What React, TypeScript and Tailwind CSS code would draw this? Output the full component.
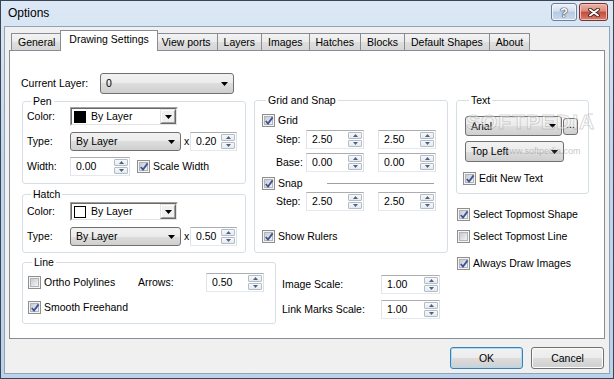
import React from "react";

const tabs = ["General", "Drawing Settings", "View ports", "Layers", "Images", "Hatches", "Blocks", "Default Shapes", "About"];

function DropArrow() {
  return (
    <svg width="7" height="4" viewBox="0 0 7 4" className="shrink-0">
      <path d="M0 0h7L3.5 4z" fill="#000" />
    </svg>
  );
}

// Win7 style drop-down list
function Combo({ text, className = "" }: { text: string; className?: string }) {
  return (
    <div className={`flex items-center rounded-[3px] border border-[#707070] bg-[linear-gradient(#f2f2f2,#ebebeb_50%,#dddddd_50%,#cfcfcf)] pl-[5px] pr-[5px] ${className}`}>
      <span className="flex-1 truncate">{text}</span>
      <DropArrow />
    </div>
  );
}

// classic owner-drawn colour combo
function ColorCombo({ swatch }: { swatch: string }) {
  return (
    <div className="flex h-[19px] w-[108px] border border-b-white border-l-[#a0a0a0] border-r-white border-t-[#a0a0a0]">
      <div className="flex flex-1 items-center border border-b-[#e3e3e3] border-l-[#696969] border-r-[#e3e3e3] border-t-[#696969] bg-white">
        <span className={`ml-[2px] h-[12px] w-[12px] border border-black ${swatch}`} />
        <span className="ml-[5px] flex-1">By Layer</span>
        <div className="flex h-full w-[16px] border border-b-[#696969] border-l-[#e3e3e3] border-r-[#696969] border-t-[#e3e3e3]">
          <div className="flex flex-1 items-center justify-center border border-b-[#a0a0a0] border-l-white border-r-[#a0a0a0] border-t-white bg-[#f0f0f0]">
            <DropArrow />
          </div>
        </div>
      </div>
    </div>
  );
}

function SpinBtn({ up }: { up?: boolean }) {
  return (
    <div className="flex flex-1 items-center justify-center rounded-[1px] border border-[#b4bcc6] bg-[linear-gradient(#f7f8fa,#e6eaef)]">
      <svg width="5" height="3" viewBox="0 0 5 3">
        <path d={up ? "M0 3L2.5 0L5 3z" : "M0 0h5L2.5 3z"} fill="#4d6185" />
      </svg>
    </div>
  );
}

function Spin({ value, className = "" }: { value: string; className?: string }) {
  return (
    <div className={`flex h-[19px] border border-[#abadb3] border-b-[#e3e9ef] border-l-[#e2e3ea] border-r-[#dbdfe6] bg-white ${className}`}>
      <span className="flex flex-1 items-center pl-[5px]">{value}</span>
      <div className="flex w-[15px] flex-col gap-px py-px pr-px">
        <SpinBtn up />
        <SpinBtn />
      </div>
    </div>
  );
}

function Check({ on }: { on?: boolean }) {
  return (
    <span className="relative flex h-[13px] w-[13px] shrink-0 items-center justify-center border border-[#8e8f8f] bg-[#f4f4f4]">
      <span className="h-[9px] w-[9px] border border-[#b1b5bb] bg-[linear-gradient(135deg,#c6cad0,#f4f4f4)]" />
      {on && (
        <svg className="absolute left-[1px] top-[1px]" width="10" height="10" viewBox="0 0 10 10">
          <path d="M1.8 5L4 7.6L8.6 1.4" fill="none" stroke="#3d5396" strokeWidth="1.8" />
        </svg>
      )}
    </span>
  );
}

function CheckRow({ on, label, className = "" }: { on?: boolean; label: string; className?: string }) {
  return (
    <div className={`flex h-[13px] items-center gap-[3px] ${className}`}>
      <Check on={on} />
      <span>{label}</span>
    </div>
  );
}

function Group({ title, className = "", children }: { title: string; className?: string; children?: React.ReactNode }) {
  return (
    <fieldset className={`rounded-[3px] border border-[#d5dfe5] ${className}`}>
      <legend className="ml-[4px] px-[2px] leading-[11px]">{title}</legend>
      {children}
    </fieldset>
  );
}

function Btn({ text, focused }: { text: string; focused?: boolean }) {
  return (
    <div
      className={`flex h-[22px] w-[73px] items-center justify-center rounded-[3px] border bg-[linear-gradient(#f2f2f2,#ebebeb_50%,#dddddd_50%,#cfcfcf)] ${
        focused ? "border-[#3c7fb1] shadow-[inset_0_0_0_1px_#a9dcf6]" : "border-[#707070] shadow-[inset_0_0_0_1px_#fcfcfc]"
      }`}
    >
      {text}
    </div>
  );
}

export default function App() {
  return (
    <div className="relative h-[379px] w-[614px] overflow-hidden font-[family-name:'Liberation_Sans',Arial,sans-serif] text-[10.5px] leading-[13px] text-black">
      <div className="flex h-full flex-col border border-[#3a4553] bg-[linear-gradient(#dce8f5,#c3d6ec_40%,#bcd1ea)] px-[3px] pb-[4px]">
        {/* Title bar */}
        <div className="flex h-[25px] shrink-0 items-start pl-[4px] pr-[2px]">
          <span className="mt-[5px] text-[12px] leading-[14px]">Options</span>
          <div className="ml-auto mt-[2px] flex gap-[2px]">
            <div className="flex h-[18px] w-[26px] items-center justify-center rounded-[3px] border border-[#6b7f9c] bg-[linear-gradient(#eef3fa,#d3e0f0_45%,#b5cae4_50%,#c9daee)] shadow-[inset_0_0_0_1px_#f0f5fb]">
              <span className="text-[13px] font-bold leading-[13px] text-white [text-shadow:0_0_1px_#1d2a3d,0_0_1px_#1d2a3d,0_0_1px_#1d2a3d]">?</span>
            </div>
            <div className="flex h-[18px] w-[29px] items-center justify-center rounded-[3px] border border-[#7d2f2a] bg-[linear-gradient(#eab3a6,#d98c7c_45%,#c3493a_50%,#d8806e)] shadow-[inset_0_0_0_1px_#efc2b7]">
              <svg width="12" height="9" viewBox="0 0 12 9">
                <path d="M2 1.5L10 7.5M10 1.5L2 7.5" stroke="#3a1a16" strokeWidth="3.6" strokeLinecap="round" />
                <path d="M2 1.5L10 7.5M10 1.5L2 7.5" stroke="#fff" strokeWidth="2" strokeLinecap="round" />
              </svg>
            </div>
          </div>
        </div>

        {/* Client area */}
        <div className="flex flex-1 flex-col border border-[#8fa3bb] bg-[#f0f0f0] px-[4px] pt-[3px]">
          {/* Tabs */}
          <div className="flex h-[20px] items-end pl-[2px]">
            {tabs.map((t, i) =>
              i === 1 ? (
                <div key={t} className="relative z-10 -mx-[2px] -mb-px flex h-[21px] items-center border border-b-0 border-[#898c95] bg-white px-[8px] pb-[3px]">
                  {t}
                </div>
              ) : (
                <div
                  key={t}
                  className={`flex h-[17px] items-center border border-b-0 border-[#898c95] bg-[linear-gradient(#f3f3f3,#ebebeb_50%,#dedede_50%,#d6d6d6)] px-[6px] ${i > 0 ? "-ml-px" : ""}`}
                >
                  {t}
                </div>
              )
            )}
          </div>

          {/* Tab page */}
          <div className="h-[289px] border border-[#898c95] bg-white pl-[12px] pt-[22px]">
            <div className="flex">
              <div className="flex w-[426px] flex-col">
                <div className="flex gap-[8px]">
                  {/* Left column */}
                  <div className="flex w-[224px] flex-col">
                    <div className="flex h-[21px] items-center">
                      <span className="-ml-px w-[79px]">Current Layer:</span>
                      <Combo text="0" className="h-[21px] w-[134px]" />
                    </div>

                    <Group title="Pen" className="mt-[2px] pb-[7px] pl-[4px]">
                      <div className="flex h-[19px] items-center">
                        <span className="w-[43px]">Color:</span>
                        <ColorCombo swatch="bg-black" />
                      </div>
                      <div className="mt-[6px] flex h-[19px] items-center">
                        <span className="w-[43px]">Type:</span>
                        <Combo text="By Layer" className="h-[19px] w-[111px]" />
                        <span className="ml-[3px] w-[6px]">x</span>
                        <Spin value="0.20" className="w-[47px]" />
                      </div>
                      <div className="mt-[6px] flex h-[19px] items-center">
                        <span className="w-[43px]">Width:</span>
                        <Spin value="0.00" className="w-[60px]" />
                        <CheckRow on label="Scale Width" className="ml-[7px]" />
                      </div>
                    </Group>

                    <Group title="Hatch" className="mt-[5px] pb-[6px] pl-[4px] pt-[2px]">
                      <div className="flex h-[19px] items-center">
                        <span className="w-[43px]">Color:</span>
                        <ColorCombo swatch="bg-white" />
                      </div>
                      <div className="mt-[6px] flex h-[19px] items-center">
                        <span className="w-[43px]">Type:</span>
                        <Combo text="By Layer" className="h-[19px] w-[111px]" />
                        <span className="ml-[3px] w-[6px]">x</span>
                        <Spin value="0.50" className="w-[47px]" />
                      </div>
                    </Group>
                  </div>

                  {/* Middle column */}
                  <div className="flex w-[194px] flex-col">
                    <Group title="Grid and Snap" className="mt-[22px] pb-[9px] pl-[7px] pt-[8px]">
                      <CheckRow on label="Grid" />
                      <div className="mt-[3px] flex h-[19px] items-center pl-[14px]">
                        <span className="w-[30px]">Step:</span>
                        <Spin value="2.50" className="w-[58px]" />
                        <Spin value="2.50" className="ml-[14px] w-[58px]" />
                      </div>
                      <div className="mt-[4px] flex h-[19px] items-center pl-[14px]">
                        <span className="w-[30px]">Base:</span>
                        <Spin value="0.00" className="w-[58px]" />
                        <Spin value="0.00" className="ml-[14px] w-[58px]" />
                      </div>
                      <div className="mt-[5px] flex h-[13px] items-center">
                        <CheckRow on label="Snap" />
                        <div className="ml-auto mr-[13px] w-[107px] border-t border-b border-t-[#a0a0a0] border-b-white" />
                      </div>
                      <div className="mt-[2px] flex h-[19px] items-center pl-[14px]">
                        <span className="w-[30px]">Step:</span>
                        <Spin value="2.50" className="w-[58px]" />
                        <Spin value="2.50" className="ml-[14px] w-[58px]" />
                      </div>
                      <CheckRow on label="Show Rulers" className="mt-[19px]" />
                    </Group>
                  </div>
                </div>

                {/* Bottom row */}
                <div className="mt-[4px] flex">
                  <Group title="Line" className="w-[254px] pb-[9px] pl-[5px] pt-[5px]">
                    <div className="flex h-[19px] items-center">
                      <div className="flex w-[110px] items-center gap-[3px]">
                        <Check />
                        <span>Ortho Polylines</span>
                      </div>
                      <span className="w-[68px]">Arrows:</span>
                      <Spin value="0.50" className="w-[58px]" />
                    </div>
                    <CheckRow on label="Smooth Freehand" className="mt-[9px]" />
                  </Group>
                  <div className="ml-[6px] mt-[18px] flex flex-col gap-[6px]">
                    <div className="flex h-[19px] items-center">
                      <span className="w-[99px]">Image Scale:</span>
                      <Spin value="1.00" className="w-[59px]" />
                    </div>
                    <div className="flex h-[19px] items-center">
                      <span className="w-[99px]">Link Marks Scale:</span>
                      <Spin value="1.00" className="w-[59px]" />
                    </div>
                  </div>
                </div>
              </div>

              {/* Right column */}
              <div className="ml-[8px] flex w-[133px] flex-col">
                <Group title="Text" className="mt-[22px] pb-[8px] pl-[8px] pt-[10px]">
                  <div className="flex h-[20px] items-center">
                    <Combo text="Arial" className="h-[20px] w-[97px]" />
                    <div className="ml-[1px] flex h-[17px] w-[15px] items-center justify-center rounded-[3px] border border-[#707070] bg-[linear-gradient(#f2f2f2,#ebebeb_50%,#dddddd_50%,#cfcfcf)] pb-[3px]">
                      ...
                    </div>
                  </div>
                  <Combo text="Top Left" className="mt-[5px] h-[21px] w-[99px]" />
                  <CheckRow on label="Edit New Text" className="-ml-[2px] mt-[10px]" />
                </Group>
                <CheckRow on label="Select Topmost Shape" className="ml-px mt-[14px]" />
                <CheckRow label="Select Topmost Line" className="ml-px mt-[9px]" />
                <CheckRow on label="Always Draw Images" className="ml-px mt-[14px]" />
              </div>
            </div>
          </div>

          {/* Dialog buttons */}
          <div className="mt-[8px] flex justify-end gap-[8px] pr-px">
            <Btn text="OK" focused />
            <Btn text="Cancel" />
          </div>
        </div>
      </div>

      {/* Softpedia watermark */}
      <div className="pointer-events-none absolute left-[466px] top-[111px] text-[21px] font-bold leading-[22px] tracking-[1px] text-white/40 [-webkit-text-stroke:1px_rgba(120,120,120,0.3)]">
        SOFTPEDIA
      </div>
      <div className="pointer-events-none absolute left-[587px] top-[112px] text-[6px] leading-[6px] text-[#999]/50">™</div>
      <div className="pointer-events-none absolute left-[503px] top-[146px] text-[9px] leading-[10px] text-[#8a8a8a]/50">www.softpedia.com</div>
    </div>
  );
}
